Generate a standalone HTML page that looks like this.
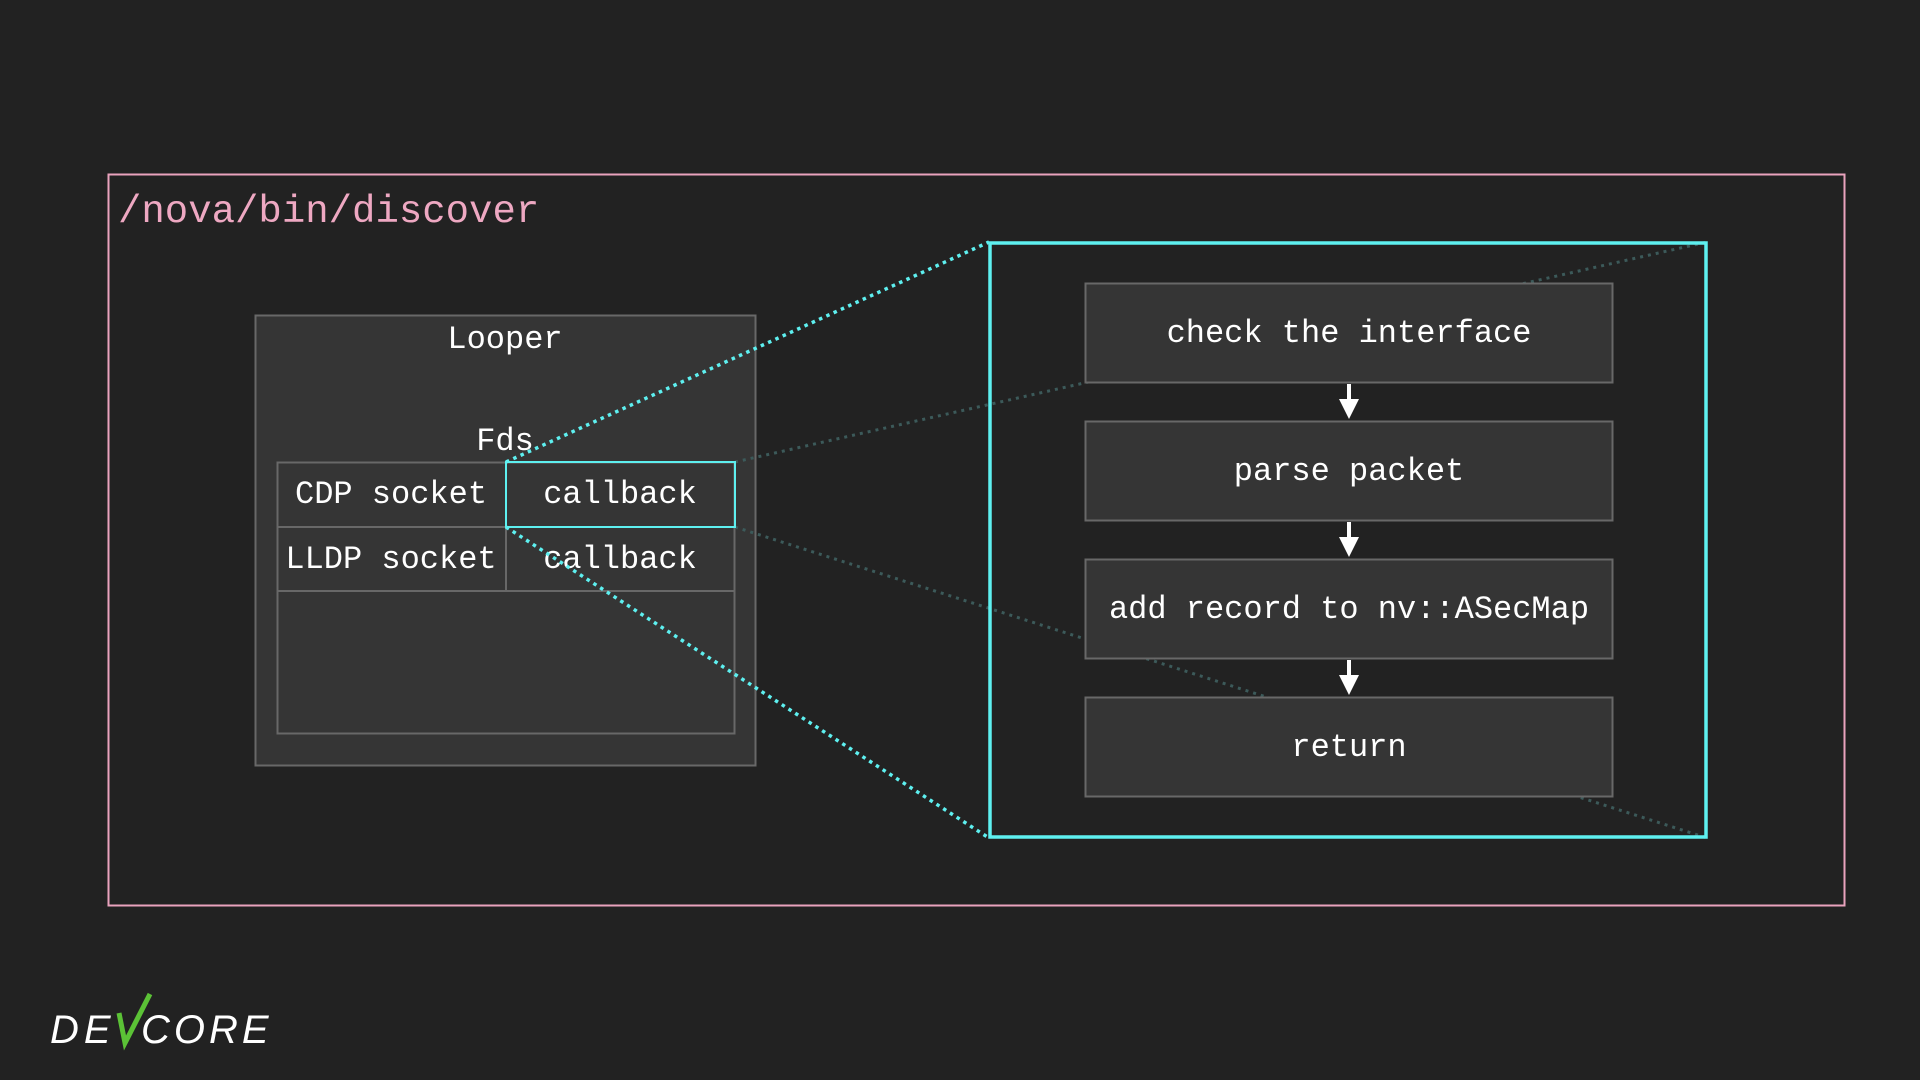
<!DOCTYPE html>
<html><head><meta charset="utf-8"><style>
html,body{margin:0;padding:0;background:#222222;width:1920px;height:1080px;overflow:hidden}
svg{display:block}
text{font-family:"Liberation Mono","DejaVu Sans Mono",monospace;fill:#ffffff}
</style></head><body>
<svg width="1920" height="1080" viewBox="0 0 1920 1080" xmlns="http://www.w3.org/2000/svg">
<rect x="0" y="0" width="1920" height="1080" fill="#222222"/>
<rect x="108.5" y="174.5" width="1736" height="731" fill="none" stroke="#e9a3bd" stroke-width="2"/>
<text x="118" y="222" font-size="39" style="fill:#eea8c2">/nova/bin/discover</text>

<!-- Looper -->
<rect x="255.5" y="315.5" width="500" height="450" fill="#353535" stroke="#686868" stroke-width="2"/>
<text x="505" y="348" font-size="32" text-anchor="middle">Looper</text>
<text x="505" y="450" font-size="32" text-anchor="middle">Fds</text>
<rect x="277.5" y="462.5" width="457" height="271" fill="#353535" stroke="#686868" stroke-width="2"/>
<line x1="277" y1="527" x2="735" y2="527" stroke="#686868" stroke-width="2"/>
<line x1="277" y1="591" x2="735" y2="591" stroke="#686868" stroke-width="2"/>
<line x1="506" y1="462" x2="506" y2="591" stroke="#686868" stroke-width="2"/>
<text x="391" y="503" font-size="32" text-anchor="middle">CDP socket</text>
<text x="391" y="568" font-size="32" text-anchor="middle">LLDP socket</text>
<text x="620" y="503" font-size="32" text-anchor="middle">callback</text>
<text x="620" y="568" font-size="32" text-anchor="middle">callback</text>

<!-- faded lines -->
<line x1="735" y1="462" x2="1707" y2="242" stroke="#3c5a5a" stroke-width="3" stroke-dasharray="3 5"/>
<line x1="735" y1="527" x2="1707" y2="838" stroke="#3c5a5a" stroke-width="3" stroke-dasharray="3 5"/>

<rect x="506" y="462" width="229" height="65" fill="none" stroke="#5ef0f0" stroke-width="2"/>

<!-- cyan dotted lines -->
<line x1="506" y1="462" x2="989" y2="242" stroke="#5ef0f0" stroke-width="3.5" stroke-dasharray="3.5 4.5"/>
<line x1="506" y1="527" x2="989" y2="838" stroke="#5ef0f0" stroke-width="3.5" stroke-dasharray="3.5 4.5"/>

<!-- right panel -->
<rect x="990" y="243" width="716" height="594" fill="none" stroke="#5ef0f0" stroke-width="3.5"/>
<g stroke="#686868" stroke-width="2" fill="#353535">
<rect x="1085.5" y="283.5" width="527" height="99"/>
<rect x="1085.5" y="421.5" width="527" height="99"/>
<rect x="1085.5" y="559.5" width="527" height="99"/>
<rect x="1085.5" y="697.5" width="527" height="99"/>
</g>
<text x="1349" y="342" font-size="32" text-anchor="middle">check the interface</text>
<text x="1349" y="480" font-size="32" text-anchor="middle">parse packet</text>
<text x="1349" y="618" font-size="32" text-anchor="middle">add record to nv::ASecMap</text>
<text x="1349" y="756" font-size="32" text-anchor="middle">return</text>
<g fill="#ffffff" stroke="#ffffff">
<line x1="1349" y1="384" x2="1349" y2="402" stroke-width="4"/>
<polygon points="1339,399 1359,399 1349,419" stroke="none"/>
<line x1="1349" y1="522" x2="1349" y2="540" stroke-width="4"/>
<polygon points="1339,537 1359,537 1349,557" stroke="none"/>
<line x1="1349" y1="660" x2="1349" y2="678" stroke-width="4"/>
<polygon points="1339,675 1359,675 1349,695" stroke="none"/>
</g>

<!-- logo -->
<text x="50" y="1043" font-size="40" font-style="italic" style="font-family:'Liberation Sans',sans-serif;letter-spacing:5px">DE</text>
<text x="141" y="1043" font-size="40" font-style="italic" style="font-family:'Liberation Sans',sans-serif;letter-spacing:4px">CORE</text>
<path d="M119 1013 L125 1043 L150 994" fill="none" stroke="#5bc236" stroke-width="5" stroke-linejoin="miter"/>
</svg>
</body></html>
